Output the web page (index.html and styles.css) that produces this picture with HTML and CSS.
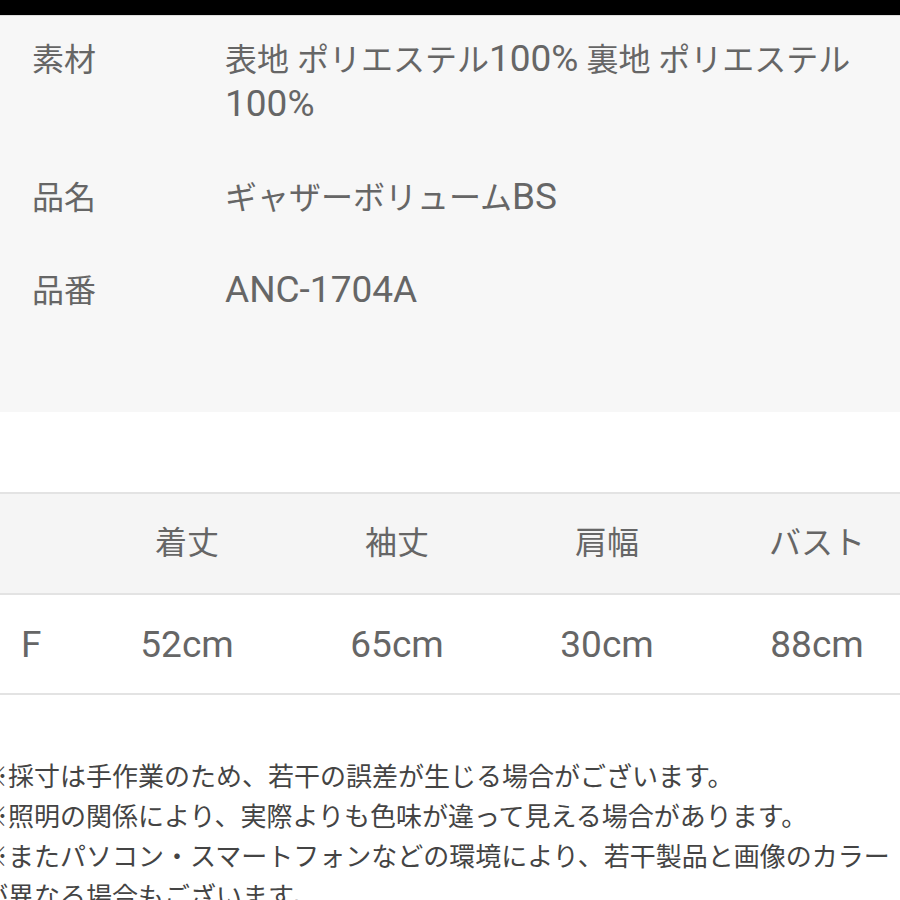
FILE: index.html
```html
<!DOCTYPE html>
<html lang="ja">
<head>
<meta charset="utf-8">
<link rel="stylesheet" href="styles.css">
</head>
<body>
<div class="page">
  <div class="topbar"></div>
  <section class="spec">
    <div class="spec-row">
      <div class="spec-label">素材</div>
      <div class="spec-value">表地 ポリエステル<span class="lat">100%</span> 裏地 ポリエステル<span class="lat">100%</span></div>
    </div>
    <div class="spec-row">
      <div class="spec-label">品名</div>
      <div class="spec-value">ギャザーボリューム<span class="lat">BS</span></div>
    </div>
    <div class="spec-row">
      <div class="spec-label">品番</div>
      <div class="spec-value"><span class="lat">ANC-1704A</span></div>
    </div>
  </section>
  <section class="size">
    <div class="size-row size-head">
      <div class="cell first"></div>
      <div class="cell">着丈</div>
      <div class="cell">袖丈</div>
      <div class="cell">肩幅</div>
      <div class="cell">バスト</div>
    </div>
    <div class="size-row size-body">
      <div class="cell first lat">F</div>
      <div class="cell lat">52cm</div>
      <div class="cell lat">65cm</div>
      <div class="cell lat">30cm</div>
      <div class="cell lat">88cm</div>
    </div>
  </section>
  <section class="notes">
    <p>※採寸は手作業のため、若干の誤差が生じる場合がございます。</p>
    <p>※照明の関係により、実際よりも色味が違って見える場合があります。</p>
    <p>※またパソコン・スマートフォンなどの環境により、若干製品と画像のカラーが異なる場合もございます。</p>
  </section>
</div>
</body>
</html>
```

FILE: styles.css
```css
html, body {
  margin: 0;
  padding: 0;
  background: #ffffff;
}
body {
  width: 900px;
  height: 900px;
  overflow: hidden;
  font-family: Roboto, "Noto Sans CJK JP", sans-serif;
}
.page {
  width: 900px;
}
.topbar {
  height: 15px;
  background: #000;
  border-bottom: 1px solid #dcdcdc;
}
.spec {
  background: #f7f7f7;
  height: 396px;
  box-sizing: border-box;
  padding-top: 22px;
  display: flex;
  flex-direction: column;
  gap: 48px;
  color: #666;
  font-size: 32px;
  line-height: 45px;
}
.spec-row {
  display: flex;
}
.spec-label {
  width: 193px;
  padding-left: 32px;
  flex: none;
}
.spec-value {
  width: 660px;
}
.lat {
  font-size: 37px;
  line-height: 1;
}
.size {
  margin-top: 80px;
  width: 922px;
  color: #666;
  font-size: 32px;
  border-top: 2px solid #e3e3e3;
}
.size-row {
  display: grid;
  grid-template-columns: 82px repeat(4, 210px);
  height: 99px;
  align-items: center;
  border-bottom: 2px solid #e3e3e3;
}
.size-head {
  background: #f5f5f5;
  height: 91px;
  padding-bottom: 8px;
}
.size-body {
  background: #fff;
  height: 98px;
}
.cell {
  text-align: center;
}
.cell.lat {
  font-size: 37px;
}
.cell.first {
  text-align: left;
  padding-left: 21px;
}
.notes {
  margin-top: 60px;
  margin-left: -18px;
  width: 920px;
  color: #444;
  font-size: 26px;
  line-height: 40px;
  font-family: "Noto Sans CJK JP", sans-serif;
}
.notes p {
  margin: 0;
}
```
